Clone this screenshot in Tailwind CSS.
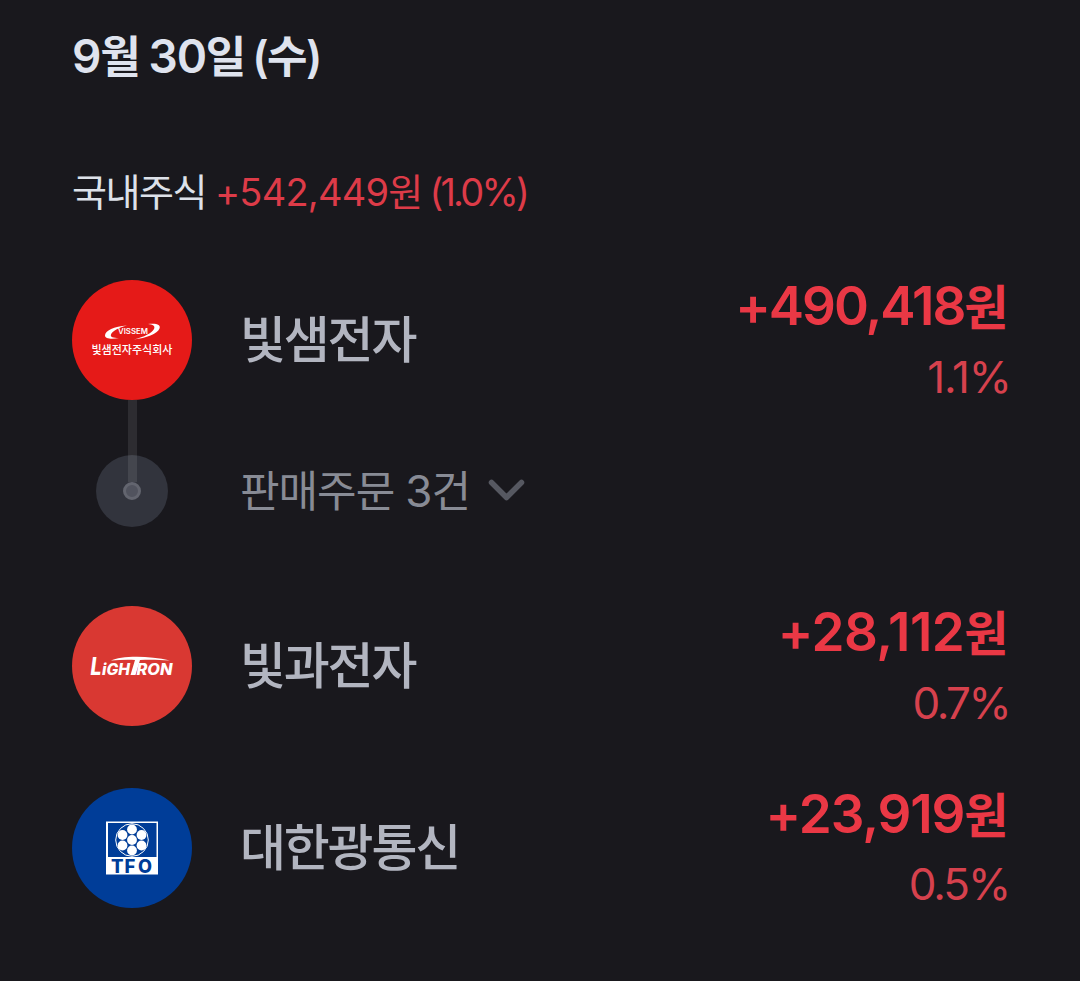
<!DOCTYPE html>
<html lang="ko">
<head>
  <meta charset="UTF-8" />
  <meta name="viewport" content="width=device-width, initial-scale=1.0"/>
  <title>9월 30일 수익</title>
  <script src="https://cdn.jsdelivr.net/npm/@tailwindcss/browser@4"></script>
</head>
<body class="h-[981px] overflow-hidden bg-[#19181d] font-['Inter','Noto_Sans_CJK_KR',sans-serif] whitespace-nowrap">

  <main class="px-[72px] pt-7">
    <!-- Date -->
    <h1 class="h-14 text-[46px] leading-[56px] font-semibold tracking-[-1.2px] text-[#dfe3ee]">9<span class="text-[44px] tracking-[-2.5px]">월</span> 30<span class="text-[44px] tracking-[-2.5px]">일</span> <span class="-ml-0.5 text-[44px] tracking-[-1.6px]">(수)</span></h1>

    <!-- Total -->
    <p class="mt-[80px] h-14 text-[38px] leading-[56px] tracking-[-1.5px] text-[#dde1e9]">국내주식 <span class="tracking-[-0.8px] text-[#dd3b48]">+542,449원<span class="ml-[7px] tracking-[-2.8px]">(1.0%)</span></span></p>

    <!-- Stock with orders -->
    <section class="mt-[60px]">
      <div class="flex h-[120px] items-center">
        <svg class="size-[120px] shrink-0" viewBox="0 0 120 120">
          <circle cx="60" cy="60" r="60" fill="#e51a18"/>
          <path d="M55 45.500C42 46 33 51 33 55.500C33 59 40 59.500 47 58C41 58 38 57 39 54.500C40 51 47 47.500 55 45.500Z" fill="#fff"/>
          <path d="M76 44C85 43 89 45 87.500 48.500C85.500 54 74 58 62 59.500C72 57 80 53 82 49C83.500 46 81 44.500 76 44Z" fill="#fff"/>
          <text x="46" y="54" textLength="30" lengthAdjust="spacingAndGlyphs" font-size="7.500" font-weight="600" fill="#fff">VISSEM</text>
          <text x="19.500" y="74" textLength="81" lengthAdjust="spacingAndGlyphs" font-size="11" font-weight="500" fill="#fff">빛샘전자주식회사</text>
        </svg>
        <div class="ml-12 grow text-[50px] leading-[60px] font-medium tracking-[-2.2px] text-[#b2b5c0]">빛샘전자</div>
        <div class="pb-[2px] text-right">
          <div class="h-[62px] text-[53px] leading-[62px] font-semibold tracking-[-2px] text-[#ea3845]">+490,418<span class="text-[48px] tracking-[-0.5px]">원</span></div>
          <div class="mt-[13px] -mr-[3px] h-[54px] text-[44px] leading-[54px] tracking-[-1px] text-[#d6414d]">1.1%</div>
        </div>
      </div>
      <div class="flex h-[127px] items-end">
        <svg class="h-[127px] w-[120px] shrink-0" viewBox="0 0 120 127">
          <circle cx="60" cy="91" r="36" fill="#32343d"/>
          <path d="M56 0H65V82H56Z" fill="#fff" fill-opacity="0.09"/>
          <circle cx="60" cy="91" r="7.500" fill="#51535e" stroke="#63656f" stroke-width="3"/>
        </svg>
        <div class="ml-12 flex h-[72px] items-center text-[#888b95]">
          <span class="text-[43px] leading-[60px] tracking-[-1px]">판매주문 <span class="text-[44px]">3</span>건</span>
          <svg class="ml-4 h-10 w-10" viewBox="0 0 40 40" fill="none" stroke="#565861" stroke-width="5.500" stroke-linecap="round" stroke-linejoin="round"><path d="M5.500 11.500L20.500 26.500L35.500 11.500"/></svg>
        </div>
      </div>
    </section>

    <section class="mt-[79px] flex h-[120px] items-center">
      <svg class="size-[120px] shrink-0" viewBox="0 0 120 120">
        <circle cx="60" cy="60" r="60" fill="#d93832"/>
        <g fill="#fff" font-weight="800" font-style="italic">
          <text x="18.500" y="69" textLength="11" lengthAdjust="spacingAndGlyphs" font-size="24">L</text>
          <text x="30" y="69" textLength="28" lengthAdjust="spacingAndGlyphs" font-size="15.500">iGH</text>
          <text x="64.500" y="69" textLength="36" lengthAdjust="spacingAndGlyphs" font-size="15.500">RON</text>
        </g>
        <path d="M39 54.500C48 50 75 49 98 54.500C85 53.500 76 53.500 68 54L63.500 69H58.500L63 54C55 53.500 47 54 39 54.500Z" fill="#fff"/>
      </svg>
      <div class="ml-12 grow text-[50px] leading-[60px] font-medium tracking-[-2.2px] text-[#b2b5c0]">빛과전자</div>
      <div class="pb-[2px] text-right">
        <div class="h-[62px] text-[53px] leading-[62px] font-semibold tracking-[-0.5px] text-[#ea3845]">+28,112<span class="text-[48px]">원</span></div>
        <div class="mt-[13px] -mr-px h-[54px] text-[44px] leading-[54px] tracking-[-2.6px] text-[#d6414d]">0.7%</div>
      </div>
    </section>

    <section class="mt-[62px] flex h-[120px] items-center">
      <svg class="size-[120px] shrink-0" viewBox="0 0 120 120">
        <circle cx="60" cy="60" r="60" fill="#003d98"/>
        <path d="M34 33.500H86V86.500H34Z" fill="#fff"/>
        <path d="M36 35H84.500V69H36Z" fill="#003d98"/>
        <circle cx="60" cy="52" r="16.300" fill="none" stroke="#fff" stroke-width="1"/>
        <g fill="#fff">
          <circle cx="60" cy="52" r="4.900"/>
          <circle cx="60" cy="41.500" r="4.900"/>
          <circle cx="60" cy="62.500" r="4.900"/>
          <circle cx="50.500" cy="47" r="4.900"/>
          <circle cx="69.500" cy="47" r="4.900"/>
          <circle cx="50.500" cy="57.500" r="4.900"/>
          <circle cx="69.500" cy="57.500" r="4.900"/>
        </g>
        <text x="39 52.500 66" y="84.700" font-size="18.500" font-weight="800" fill="#003d98">TF<tspan textLength="14" lengthAdjust="spacingAndGlyphs">O</tspan></text>
      </svg>
      <div class="ml-12 grow text-[50px] leading-[60px] font-medium tracking-[-2.2px] text-[#b2b5c0]">대한광통신</div>
      <div class="pb-[3px] text-right">
        <div class="h-[62px] text-[53px] leading-[62px] font-semibold tracking-[-1.1px] text-[#ea3845]">+23,919<span class="text-[48px] tracking-[-0.5px]">원</span></div>
        <div class="mt-3 -mr-px h-[54px] text-[44px] leading-[54px] tracking-[-2.1px] text-[#d6414d]">0.5%</div>
      </div>
    </section>
  </main>

</body>
</html>
